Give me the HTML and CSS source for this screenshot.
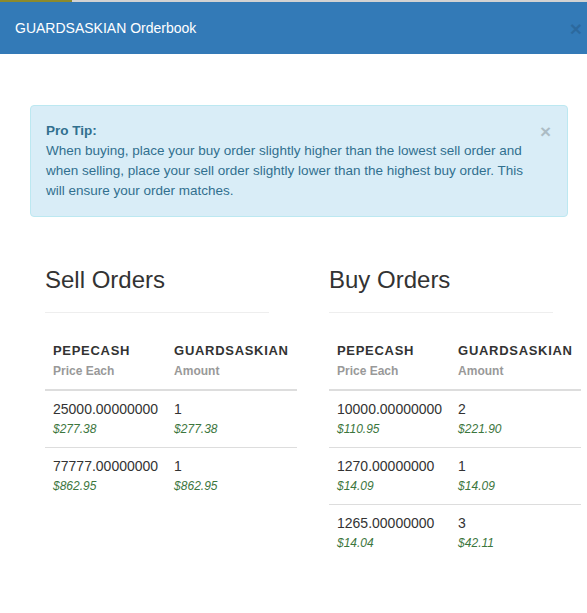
FILE: index.html
```html
<!DOCTYPE html>
<html lang="en">
<head>
  <meta charset="UTF-8" />
  <title>GUARDSASKIAN Orderbook</title>
  <link rel="stylesheet" href="styles.css">
</head>
<body>
  <div class="backdrop-strip"><span class="strip-mark"></span></div>

  <div class="modal">
    <div class="modal-header">
      <h4 class="modal-title">GUARDSASKIAN Orderbook</h4>
      <span class="close">&times;</span>
    </div>

    <div class="modal-body">
      <div class="alert">
        <span class="close alert-close">&times;</span>
        <strong>Pro Tip:</strong><br>
        When buying, place your buy order slightly higher than the lowest sell order and when selling, place your sell order slightly lower than the highest buy order. This will ensure your order matches.
      </div>

      <div class="books">
        <div class="book">
          <h3>Sell Orders</h3>
          <hr>
          <table>
            <thead>
              <tr>
                <th>PEPECASH<span class="sub">Price Each</span></th>
                <th>GUARDSASKIAN<span class="sub">Amount</span></th>
              </tr>
            </thead>
            <tbody>
              <tr>
                <td>25000.00000000<span class="usd">$277.38</span></td>
                <td>1<span class="usd">$277.38</span></td>
              </tr>
              <tr>
                <td>77777.00000000<span class="usd">$862.95</span></td>
                <td>1<span class="usd">$862.95</span></td>
              </tr>
            </tbody>
          </table>
        </div>

        <div class="book">
          <h3>Buy Orders</h3>
          <hr>
          <table>
            <thead>
              <tr>
                <th>PEPECASH<span class="sub">Price Each</span></th>
                <th>GUARDSASKIAN<span class="sub">Amount</span></th>
              </tr>
            </thead>
            <tbody>
              <tr>
                <td>10000.00000000<span class="usd">$110.95</span></td>
                <td>2<span class="usd">$221.90</span></td>
              </tr>
              <tr>
                <td>1270.00000000<span class="usd">$14.09</span></td>
                <td>1<span class="usd">$14.09</span></td>
              </tr>
              <tr>
                <td>1265.00000000<span class="usd">$14.04</span></td>
                <td>3<span class="usd">$42.11</span></td>
              </tr>
            </tbody>
          </table>
        </div>
      </div>
    </div>
  </div>
</body>
</html>
```

FILE: styles.css
```css
body {
  margin: 0;
  font-family: "Liberation Sans", Arial, sans-serif;
  font-size: 14px;
  line-height: 20px;
  color: #333;
  background-color: #fff;
}
.backdrop-strip {
  height: 2px;
  background-color: #d2d2d2;
}
.strip-mark {
  display: block;
  width: 72px;
  height: 2px;
  background-color: #8c8a2c;
}
.modal-header {
  height: 52px;
  padding: 0 15px;
  background-color: #337ab7;
  display: flex;
  align-items: center;
  justify-content: space-between;
}
.modal-title {
  margin: 0;
  font-size: 14px;
  font-weight: normal;
  color: #fff;
}
.close {
  font-size: 21px;
  font-weight: bold;
  line-height: 1;
  color: #000;
  opacity: 0.2;
}
.modal-header .close {
  margin-right: -10px;
  opacity: 0.13;
}
.modal-body {
  padding: 51px 19px 40px 30px;
}
.alert {
  position: relative;
  padding: 15px 35px 15px 15px;
  background-color: #d9edf7;
  border: 1px solid #bce8f1;
  border-radius: 4px;
  color: #31708f;
  font-size: 13.5px;
  line-height: 20px;
}
.alert-close {
  position: absolute;
  top: 16px;
  right: 16px;
  font-size: 19px;
}
.books {
  display: flex;
  gap: 60px;
  padding-left: 15px;
}
.book {
  flex: 0 0 224px;
  width: 224px;
}
h3 {
  margin: 50px 0 0;
  font-size: 24px;
  font-weight: normal;
  line-height: 26px;
  color: #333;
}
hr {
  margin: 19px 0 20px;
  border: 0;
  border-top: 1px solid #eee;
}
table {
  border-collapse: collapse;
  white-space: nowrap;
}
th {
  padding: 8px;
  text-align: left;
  vertical-align: bottom;
  font-size: 13px;
  letter-spacing: 0.7px;
  border-bottom: 2px solid #ddd;
}
.sub {
  display: block;
  font-size: 12px;
  letter-spacing: 0;
  color: #999;
}
td {
  padding: 8px;
  vertical-align: top;
  border-top: 1px solid #ddd;
}
tbody tr:first-child td {
  border-top: 0;
}
.usd {
  display: block;
  font-size: 12px;
  font-style: italic;
  color: #3c763d;
}
```
